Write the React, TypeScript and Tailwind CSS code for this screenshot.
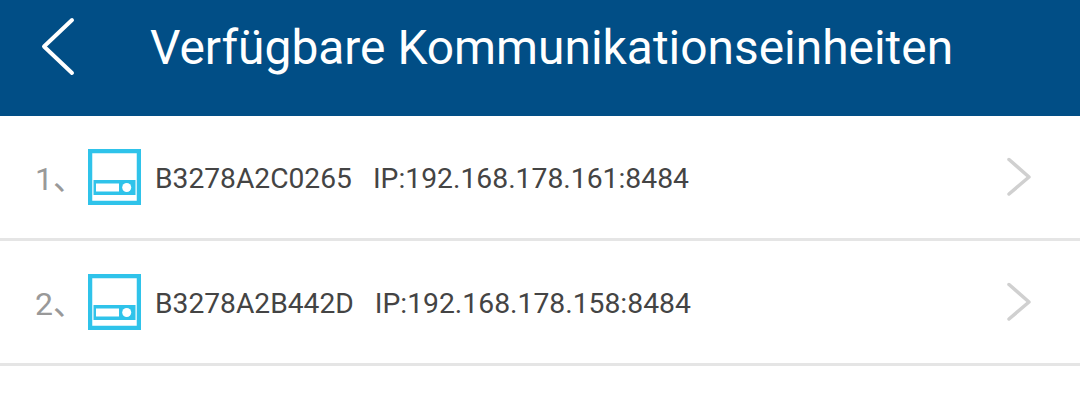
const devices = [
  { no: '1', name: 'B3278A2C0265', ip: 'IP:192.168.178.161:8484' },
  { no: '2', name: 'B3278A2B442D', ip: 'IP:192.168.178.158:8484' },
];

const DeviceIcon = () => (
  <svg width="53" height="56" viewBox="0 0 53 56" className="shrink-0">
    <rect x="2" y="2" width="49" height="52" fill="none" stroke="#2fc3ea" strokeWidth="4.500" />
    <rect x="5.500" y="31" width="42" height="15" fill="#2fc3ea" />
    <rect x="8" y="34.500" width="23" height="8" fill="#fff" />
    <circle cx="38.700" cy="38.500" r="4.500" fill="#fff" />
  </svg>
);

const App = () => {
  return (
    <div className="w-[1080px] h-[419px] bg-white overflow-hidden font-['Roboto',sans-serif]">
      <header className="h-[116px] bg-[#014e86] flex items-start">
        <svg width="150" height="80" viewBox="0 0 150 80" className="shrink-0">
          <path d="M72 20 L44 46.500 L72 73" fill="none" stroke="#fff" strokeWidth="4" strokeLinecap="round" strokeLinejoin="round" />
        </svg>
        <h1 className="text-[47.900px] leading-[96px] font-normal text-white whitespace-nowrap">
          Verfügbare Kommunikationseinheiten
        </h1>
      </header>
      <ul>
        {devices.map((d) => (
          <li key={d.no} className="h-[125px] border-b-[3px] border-[#e5e5e5] flex items-center pl-[35px] pr-[48px]">
            <span className="w-[53px] pt-[3px] text-[32px] text-[#999999] whitespace-nowrap font-['Roboto','Noto_Sans_CJK_SC',sans-serif]">
              {d.no}、
            </span>
            <DeviceIcon />
            <span className="ml-[14px] pt-[4px] text-[28.200px] text-[#444444] whitespace-nowrap">{d.name}</span>
            <span className="ml-[21px] pt-[4px] text-[28.300px] text-[#444444] whitespace-nowrap">{d.ip}</span>
            <svg width="26" height="40" viewBox="0 0 26 40" className="ml-auto shrink-0">
              <path d="M3 2.500 L23 20 L3 37" fill="none" stroke="#d0d0d0" strokeWidth="3.500" strokeLinecap="round" strokeLinejoin="round" />
            </svg>
          </li>
        ))}
      </ul>
    </div>
  );
};

export default App;
